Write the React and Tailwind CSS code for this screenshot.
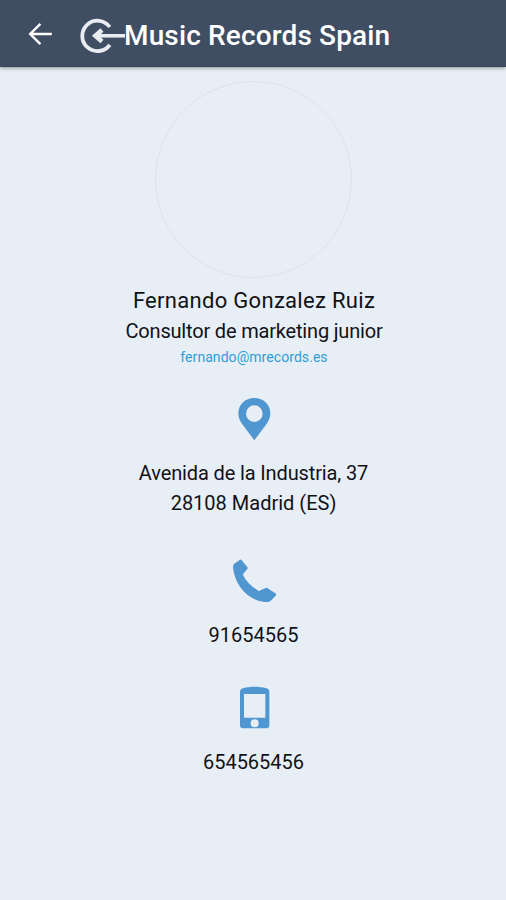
const BackIcon = () => (
  <svg className="mb-[2px] h-[26px] w-[26px] shrink-0" viewBox="0 0 26 26" fill="none" stroke="#fff" strokeWidth="2.4">
    <path d="M24.8 13H3.5M13.4 2.8L3.2 13l10.2 10.2" />
  </svg>
);

const Logo = () => (
  <svg className="mt-[2px] h-[38px] w-[47px] shrink-0" viewBox="0 0 47 38" fill="none" stroke="#e9edf2">
    <path d="M31.8 10A15.2 15.2 0 1 0 31.8 27.8" strokeWidth="3.8" />
    <path d="M47 18.8H18" strokeWidth="3.6" />
    <path d="M24 13l-6.6 5.8 6.6 5.8" strokeWidth="4.6" />
  </svg>
);

const PinIcon = () => (
  <svg className="h-[45px] w-[35px]" viewBox="36 36 105 135" fill="#5096d0">
    <path
      fillRule="evenodd"
      d="M88 39C60 39 40 59 40 85c0 13 5 24 13 34l35 47 35-47c8-10 13-21 13-34 0-26-20-46-48-46zm0 22a25 25 0 1 1 0 50 25 25 0 0 1 0-50z"
    />
  </svg>
);

const PhoneIcon = () => (
  <svg className="h-[45px] w-[45px]" viewBox="21 27 135 135" fill="#5096d0">
    <path d="M45 29c2-1 4 0 5 2l17 20c1 2 1 4 0 6L55 71c-1 2-1 4 0 6 10 19 27 35 45 45 2 1 4 1 6-1l16-7c2-1 4-1 6 1l23 15c3 2 3 5 1 7l-13 14c-5 5-12 6-20 5C69 151 29 107 24 52c0-6 2-10 7-13z" />
  </svg>
);

const MobileIcon = () => (
  <svg className="h-[45px] w-[33px]" viewBox="39 32 99 135" fill="#5096d0">
    <path
      fillRule="evenodd"
      d="M54 39c20-6 50-6 70 0 6 2 9 5 9 10v101c0 6-3 9-9 9H54c-6 0-9-3-9-9V49c0-5 3-8 9-10zm3 17v71h64V56zm32 76a12 12 0 1 0 0 24 12 12 0 0 0 0-24z"
    />
  </svg>
);

export default function App() {
  return (
    <div className="flex h-[900px] w-[506px] flex-col bg-[#e8eef5] font-['Roboto',sans-serif] text-[#101215]">
      <header className="flex h-[67px] shrink-0 items-center border-b border-[#34445a] bg-[#3f4e63] pt-[4px] pl-[27px] shadow-[0_1px_4px_rgba(0,0,0,0.4)]">
        <BackIcon />
        <div className="flex items-center pl-[25px]">
          <Logo />
          <h1 className="-ml-px pt-[2px] text-[28px] leading-8 font-medium tracking-[0.14px] whitespace-nowrap text-white">
            Music Records Spain
          </h1>
        </div>
      </header>

      <main className="flex flex-col items-center pt-[14px] pl-[1px] whitespace-nowrap">
        <div className="h-[197px] w-[197px] rounded-full border border-[#dfe3e4]" />
        <h2 className="mt-[9px] pl-[1px] text-[22px] leading-[28px] tracking-[0.3px]">Fernando Gonzalez Ruiz</h2>
        <p className="mt-[3px] pl-[1px] text-[20px] leading-[26px] tracking-[-0.18px]">Consultor de marketing junior</p>
        <a className="mt-[3px] pl-[1px] text-[14px] leading-[20px] tracking-[0.06px] text-[#2c9fdb]">fernando@mrecords.es</a>

        <div className="mt-[30px] pl-[1px]">
          <PinIcon />
        </div>
        <div className="mt-[17px] text-center text-[20px] leading-[29px]">
          <p className="tracking-[-0.13px]">Avenida de la Industria, 37</p>
          <p className="mt-[1px]">28108 Madrid (ES)</p>
        </div>

        <div className="mt-[41px] pl-[1px]">
          <PhoneIcon />
        </div>
        <p className="mt-[17px] text-[20px] leading-[29px]">91654565</p>

        <div className="mt-[36px] pl-[1px]">
          <MobileIcon />
        </div>
        <p className="mt-[17px] text-[20px] leading-[29px]">654565456</p>
      </main>
    </div>
  );
}
